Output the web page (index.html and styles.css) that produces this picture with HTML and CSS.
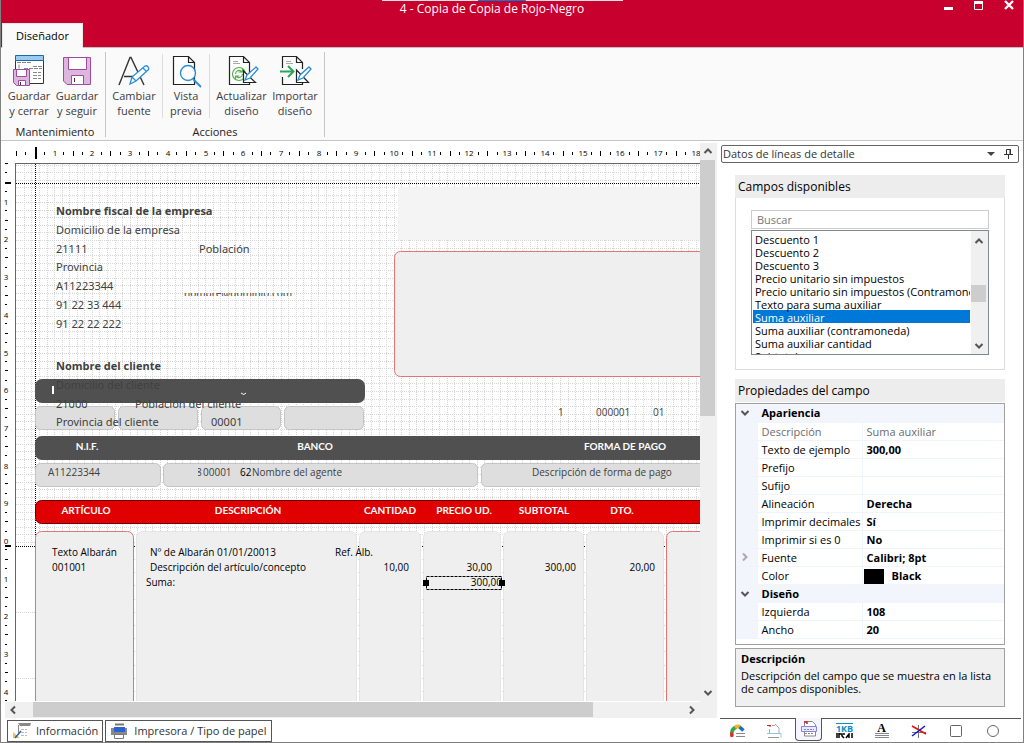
FILE: index.html
```html
<!DOCTYPE html>
<html lang="es">
<head>
<meta charset="utf-8">
<title>4 - Copia de Copia de Rojo-Negro</title>
<link rel="stylesheet" href="styles.css">
</head>
<body>
<div class="window">
  <header class="titlebar">
    <div class="load-strip"><span></span></div>
    <h1 class="title">4 - Copia de Copia de Rojo-Negro</h1>
    <div class="win-buttons">
      <button aria-label="Minimizar"><svg width="12" height="12"><path d="M1 7h9v3H1z" fill="#fff"/></svg></button>
      <button aria-label="Maximizar"><svg width="12" height="12"><path d="M1.5 2.5h8v7h-8z" fill="none" stroke="#fff"/><path d="M1 1h9v3H1z" fill="#fff"/></svg></button>
      <button aria-label="Cerrar"><svg width="12" height="12"><path d="M2 1l8 8M10 1l-8 8" stroke="#fff" stroke-width="2.4"/></svg></button>
    </div>
    <nav class="tabs"><button class="tab">Diseñador</button></nav>
  </header>

  <section class="ribbon">
    <div class="group">
      <div class="tools">
        <button class="tool">
          <svg width="34" height="34"><path d="M3.500 6.500h28v23h-28z" fill="#fff" stroke="#333"/><path d="M3.500 1.500h28v5h-28z" fill="#9ccbee" stroke="#1769b0"/><path d="M5 8.500h14M7 10.500v4M21 12.500h9M12 14.500h18M21 18.500h8M21 21.500h8M21 24.500h8" stroke="#888" stroke-dasharray="4 1"/><path d="M1.500 15.500h16v16h-13l-3-3z" fill="#dcb6dc" stroke="#a04ba0"/><path d="M4.500 15.500h10v7h-10zM6.500 26.500h7v5h-7z" fill="#fff" stroke="#a04ba0"/><path d="M8.500 28v3" stroke="#333"/></svg>
          <span>Guardar<br>y cerrar</span>
        </button>
        <button class="tool">
          <svg width="34" height="34"><path d="M3.500 3.500h27v27H7l-3.500-3.500z" fill="#dcb6dc" stroke="#a04ba0"/><path d="M8.500 3.500h18v12h-18zM11.500 21.500h12v9h-12z" fill="#fff" stroke="#a04ba0"/><path d="M14.500 24v4" stroke="#333"/></svg>
          <span>Guardar<br>y seguir</span>
        </button>
      </div>
      <div class="caption">Mantenimiento</div>
    </div>
    <div class="group">
      <div class="tools">
        <button class="tool">
          <svg width="34" height="34"><path d="M2 31L13 3.500h1L27 31M7 22.500h10" fill="none" stroke="#333" stroke-width="1.400"/><path d="M13 30l2-7L28 12c2-1 5 2 3 4L19 27l-6 3zM15 23l4 4M26 14l3 3" fill="#fff" stroke="#2a8dd4" stroke-width="1.300"/></svg>
          <span>Cambiar<br>fuente</span>
        </button>
        <button class="tool sep">
          <svg width="34" height="34"><path d="M4.500 2.500h15l6 6v22h-21zM19.500 2.500v6h6" fill="#fff" stroke="#222" stroke-width="1.200"/><circle cx="19" cy="19" r="7.500" fill="#fff" stroke="#2a8dd4" stroke-width="1.400"/><path d="M24 25l8 8" stroke="#2a8dd4" stroke-width="1.800"/></svg>
          <span>Vista<br>previa</span>
        </button>
        <button class="tool sep wide">
          <svg width="34" height="34"><path d="M4.500 2.500h14l6 6v22h-20zM18.500 2.500v6h6" fill="#fff" stroke="#222" stroke-width="1.200"/><path d="M8 7.500h5M8 9.500h7" stroke="#aaa"/><circle cx="14" cy="20" r="6.500" fill="#fff" stroke="#55b04c" stroke-width="1.200"/><path d="M10.500 20a3.500 3.500 0 0 1 6-2.500M17.500 20a3.500 3.500 0 0 1-6 2.500M17.500 14v4h-4M10.500 26v-4h4" fill="none" stroke="#55b04c" stroke-width="1.200"/><path d="M18.500 17v11.500h12z" fill="#fff" stroke="#222" stroke-width="1.200"/><path d="M20 26l2-5 9-8 2 2-8 9z" fill="#fff" stroke="#2a8dd4" stroke-width="1.300"/></svg>
          <span>Actualizar<br>diseño</span>
        </button>
        <button class="tool last">
          <svg width="34" height="34"><path d="M4.500 14V2.500h14l6 6V15M18.500 2.500v6h6M4.500 23v7.500h20V28" fill="none" stroke="#222" stroke-width="1.200"/><path d="M8 7.500h5M8 9.500h7" stroke="#aaa"/><path d="M2 17.500h13M10 12l5.500 5.500L10 23" fill="none" stroke="#2ea35c" stroke-width="2"/><path d="M18.500 16v12.500h12z" fill="#fff" stroke="#222" stroke-width="1.200"/><path d="M20 26l2-5 9-8 2 2-8 9z" fill="#fff" stroke="#2a8dd4" stroke-width="1.300"/></svg>
          <span>Importar<br>diseño</span>
        </button>
      </div>
      <div class="caption">Acciones</div>
    </div>
  </section>

  <main class="main">
    <section class="designer">
      <div class="corner"></div>
      <svg class="hruler" id="hruler"></svg>
      <svg class="vruler" id="vruler"></svg>
      <svg class="surface">
        <g transform="translate(-16 -164)">
          <g id="grid" class="grid"></g>
          <path class="guide" d="M16 183.500H2000M16 546.500H2000M35.500 164V547"/>
          <rect x="398" y="187" width="1600" height="53" fill="#f4f4f4"/>
          <rect class="redbox" x="394.500" y="251.500" width="1600" height="125" rx="6"/>
          <rect x="35" y="379" width="330" height="24" rx="7" fill="#505050"/>
          <g class="cells">
            <rect x="35.500" y="406.500" width="79" height="23" rx="5"/>
            <rect x="118.500" y="406.500" width="79" height="23" rx="5"/>
            <rect x="201.500" y="406.500" width="79" height="23" rx="5"/>
            <rect x="284.500" y="406.500" width="79" height="23" rx="5"/>
            <rect x="35.500" y="463.500" width="125" height="23" rx="5"/>
            <rect x="163.500" y="463.500" width="314" height="23" rx="5"/>
            <rect x="481.500" y="463.500" width="1600" height="23" rx="5"/>
          </g>
          <rect x="35" y="436" width="1700" height="24" rx="7" fill="#505050"/>
          <rect x="35.500" y="500.500" width="1700" height="23" rx="6" fill="#e00000" stroke="#6e0000"/>
          <rect class="redbox" x="35.500" y="531.500" width="98" height="1000" rx="6"/>
          <g class="cols">
            <rect x="136.500" y="531.500" width="220" height="1000" rx="6"/>
            <rect x="359.500" y="531.500" width="61" height="1000" rx="6"/>
            <rect x="423.500" y="531.500" width="77" height="1000" rx="6"/>
            <rect x="503.500" y="531.500" width="80" height="1000" rx="6"/>
            <rect x="586.500" y="531.500" width="77" height="1000" rx="6"/>
          </g>
          <rect class="redbox" x="666.500" y="531.500" width="1600" height="1000" rx="6"/>
          <path d="M52 386h2v8h-2z" fill="#fff"/>
          <path d="M241 393q3 3 5 0" fill="none" stroke="#fff"/>
          <g class="field">
            <text class="strong" x="56" y="215">Nombre fiscal de la empresa</text>
            <text x="56" y="234">Domicilio de la empresa</text>
            <text x="56" y="253">21111</text>
            <text x="199" y="253">Población</text>
            <text x="56" y="271">Provincia</text>
            <text x="56" y="290">A11223344</text>
            <text x="56" y="309">91 22 33 444</text>
            <text x="56" y="328">91 22 22 222</text>
            <svg x="184" y="293" width="120" height="3"><text class="mail" x="0" y="4">nombre@dominio.com</text></svg>
            <text class="strong" x="56" y="370">Nombre del cliente</text>
            <text x="56" y="389">Domicilio del cliente</text>
            <text x="56" y="408">21000</text>
            <text x="135" y="408">Población del cliente</text>
            <text x="56" y="426">Provincia del cliente</text>
            <text x="211" y="426">00001</text>
          </g>
          <g class="small">
            <text x="558" y="416">1</text>
            <text x="596" y="416">000001</text>
            <text x="653" y="416">01</text>
            <text x="48" y="476">A11223344</text>
            <svg x="198" y="464" width="4" height="20"><text x="-2" y="12">8</text></svg>
            <text x="203" y="476">00001</text>
            <text x="252" y="476">Nombre del agente</text>
            <text x="532" y="476">Descripción de forma de pago</text>
          </g>
          <g class="small dark">
            <text x="240" y="476">62</text>
            <text x="52" y="556">Texto Albarán</text>
            <text x="52" y="571">001001</text>
            <text x="150" y="556">Nº de Albarán 01/01/20013</text>
            <text x="150" y="571">Descripción del artículo/concepto</text>
            <text x="146" y="586">Suma:</text>
            <text x="335" y="556">Ref. Alb.</text>
            <text class="num" x="409" y="571">10,00</text>
            <text class="num" x="492" y="571">30,00</text>
            <text class="num" x="576" y="571">300,00</text>
            <text class="num" x="655" y="571">20,00</text>
            <text class="num" x="502" y="586">300,00</text>
          </g>
          <g class="head">
            <text x="87" y="450">N.I.F.</text>
            <text x="315" y="450">BANCO</text>
            <text x="625" y="450">FORMA DE PAGO</text>
            <text x="86" y="514">ARTÍCULO</text>
            <text x="248" y="514">DESCRIPCIÓN</text>
            <text x="390" y="514">CANTIDAD</text>
            <text x="464" y="514">PRECIO UD.</text>
            <text x="544" y="514">SUBTOTAL</text>
            <text x="622" y="514">DTO.</text>
          </g>
          <rect x="426.500" y="576.500" width="75" height="13" fill="none" stroke="#000" stroke-dasharray="3 1"/>
          <path d="M423 580h6v6h-6zM499 580h6v6h-6z"/>
        </g>
      </svg>
      <div class="vscroll">
        <svg width="16" height="16"><path d="M4.500 10L8 6.500 11.500 10" class="chev"/></svg>
        <div class="vthumb"></div>
        <svg class="down" width="16" height="16"><path d="M4.500 6L8 9.500 11.500 6" class="chev"/></svg>
      </div>
      <div class="hscroll">
        <svg width="16" height="16"><path d="M10 4.500L6.500 8 10 11.500" class="chev"/></svg>
        <div class="hthumb"></div>
        <svg class="right" width="16" height="16"><path d="M6 4.500L9.500 8 6 11.500" class="chev"/></svg>
      </div>
      <div class="doctabs">
        <button><svg width="20" height="18"><path d="M6 1h13l-1 3H8z" fill="#888"/><path d="M6.500 3v8" stroke="#888"/><path d="M9 7.500h6M9 10.500h6M9 13.500h6" stroke="#bbb" stroke-dasharray="3 1"/><path d="M1 10l7 6H1z" fill="#f2bf62"/><path d="M3 16l6-7" stroke="#2b63a8" stroke-width="1.500"/></svg>Información</button>
        <button><svg width="20" height="18"><path d="M5 2.500h9M3 6v7M16 6v7" stroke="#777" stroke-width="2" fill="none"/><path d="M1 6h16v7H1z" fill="#888"/><path d="M4 5h11v5H4z" fill="#2c61d0"/><path d="M4.500 12.500h9v4h-9z" fill="#fff" stroke="#777"/></svg>Impresora / Tipo de papel</button>
      </div>
    </section>

    <aside class="panel">
      <div class="panel-title">
        <h2>Datos de líneas de detalle</h2>
        <button aria-label="Opciones"><svg width="10" height="12"><path d="M1 4h8L5 8z" fill="#444"/></svg></button>
        <button aria-label="Anclar"><svg width="10" height="12"><path d="M2.500 1.500h4v5h-4zM6 1v6M0 6.500h9M4.500 7v4" fill="none" stroke="#333"/></svg></button>
      </div>
      <div class="panel-body">
        <section class="box">
          <h3>Campos disponibles</h3>
          <div class="box-body">
            <input class="search" type="text" placeholder="Buscar" aria-label="Buscar">
            <div class="listwrap">
              <select class="list" size="10" aria-label="Campos disponibles">
                <option>Descuento 1</option><option>Descuento 2</option><option>Descuento 3</option><option>Precio unitario sin impuestos</option><option>Precio unitario sin impuestos (Contramoneda)</option><option>Texto para suma auxiliar</option><option selected>Suma auxiliar</option><option>Suma auxiliar (contramoneda)</option><option>Suma auxiliar cantidad</option><option>Subtotal</option>
              </select>
              <div class="listscroll">
                <svg width="16" height="16"><path d="M4.500 10L8 6.500 11.500 10" class="chev"/></svg>
                <div class="lthumb"></div>
                <svg class="ldown" width="16" height="16"><path d="M4.500 6L8 9.500 11.500 6" class="chev"/></svg>
              </div>
            </div>
          </div>
        </section>
        <section class="props">
          <h3>Propiedades del campo</h3>
          <div class="propwrap">
          <table class="proptable">
            <colgroup><col class="c1"><col class="c2"><col></colgroup>
            <tr class="cat"><td><svg width="16" height="16"><path d="M4.500 6L8 9.500 11.500 6" class="chev"/></svg></td><th colspan="2">Apariencia</th></tr>
            <tr class="off"><td></td><th>Descripción</th><td>Suma auxiliar</td></tr>
            <tr><td></td><th>Texto de ejemplo</th><td>300,00</td></tr>
            <tr><td></td><th>Prefijo</th><td></td></tr>
            <tr><td></td><th>Sufijo</th><td></td></tr>
            <tr><td></td><th>Alineación</th><td>Derecha</td></tr>
            <tr><td></td><th>Imprimir decimales</th><td>Sí</td></tr>
            <tr><td></td><th>Imprimir si es 0</th><td>No</td></tr>
            <tr><td><svg width="16" height="16"><path d="M6 4.500L9.500 8 6 11.500" class="chev pale"/></svg></td><th>Fuente</th><td>Calibri; 8pt</td></tr>
            <tr><td></td><th>Color</th><td class="colorcell"><span class="swatch"></span>Black</td></tr>
            <tr class="cat"><td><svg width="16" height="16"><path d="M4.500 6L8 9.500 11.500 6" class="chev"/></svg></td><th colspan="2">Diseño</th></tr>
            <tr><td></td><th>Izquierda</th><td>108</td></tr>
            <tr><td></td><th>Ancho</th><td>20</td></tr>
          </table>
          </div>
          <div class="help"><strong>Descripción</strong><p>Descripción del campo que se muestra en la lista de campos disponibles.</p></div>
        </section>
      </div>
      <nav class="bottomtabs">
        <button aria-label="Aspecto"><svg width="18" height="16"><path d="M3 13C2 8 4 5 8 4" fill="none" stroke="#2aa84a" stroke-width="3.500"/><path d="M6 4.500q3-2 5-.5" stroke="#f2b31c" stroke-width="3.500" fill="none"/><path d="M10.500 4l4 3.500" stroke="#1c6dc4" stroke-width="3.500"/><path d="M2.500 9.500l.5 4.500" stroke="#e03020" stroke-width="3"/><path d="M7 10.500h9M7 13.500h9" stroke="#888"/></svg></button>
        <button aria-label="Documento"><svg width="18" height="16"><path d="M2 2.500h4M5 2v2" stroke="#c22" fill="none"/><path d="M7 2.500h3M10 1l4 4v5M4.500 6v5" stroke="#aaa" fill="none"/><path d="M2 10.500h14v4" stroke="#8cc4ea" fill="none"/><path d="M3 14.500h11" stroke="#999"/></svg></button>
        <button class="on" aria-label="Líneas de detalle"><svg width="18" height="18"><path d="M4.500 16V1.500h8l3 3V16z" fill="#fff" stroke="#888"/><path d="M4 2h3v2" stroke="#c22" fill="none" stroke-width="1.500"/><path d="M1.500 6.500h15v5h-15z" fill="#e8e8ff" stroke="#8585e0"/><path d="M4 9.500h10M5 13.500h9" stroke="#888" stroke-dasharray="2 1"/></svg></button>
        <button class="kb" aria-label="Código"><span>1KB</span><svg width="18" height="6"><path d="M1 0v5M3 0v5M3 1h3v2l2 2M8 0v2M10 5l3-4v4M16 0v5" fill="none" stroke="#000" stroke-width="1.500"/></svg></button>
        <button class="letter" aria-label="Texto"><span>A</span><svg width="16" height="6"><path d="M1 .5h14M1 2.500h14M1 4.500h14" stroke="#888"/></svg></button>
        <button aria-label="Líneas"><svg width="18" height="16"><path d="M8.500 2v13M2 9.500h14" stroke="#777"/><path d="M2 3l14 8" stroke="#e01010" stroke-width="1.500"/><path d="M2 13L15 3" stroke="#1414c8" stroke-width="1.500"/></svg></button>
        <button aria-label="Rectángulo"><svg width="16" height="16"><rect x="2.500" y="2.500" width="11" height="11" rx="1" fill="none" stroke="#666"/></svg></button>
        <button aria-label="Círculo"><svg width="16" height="16"><circle cx="8" cy="8" r="5.500" fill="none" stroke="#666"/></svg></button>
      </nav>
    </aside>
  </main>
</div>
<script src="ruler.js"></script>
</body>
</html>
```
FILE: styles.css
```css
* { box-sizing: border-box; }
body, h1, h2, h3, p { margin: 0; }
body {
  height: 100vh;
  font-family: "Open Sans", "Noto Sans", sans-serif;
  font-size: 11px;
  line-height: 14px;
  color: #000;
  background: #fff;
}
button {
  font: inherit;
  color: inherit;
  background: none;
  border: 0;
  padding: 0;
  margin: 0;
}
svg { display: block; flex: none; }

.window {
  display: flex;
  flex-direction: column;
  height: 100%;
  border: 1px solid #808080;
  border-top: 0;
}

.titlebar {
  position: relative;
  display: flex;
  flex-direction: column;
  flex: none;
  height: 48px;
  background: #c8002d;
  border-bottom: 1px solid #c0c0c0;
}
.load-strip {
  position: absolute;
  top: 0;
  left: 381px;
  width: 241px;
  height: 1px;
  background: #e4e4e4;
}
.load-strip span { display: block; width: 48px; height: 1px; margin-left: 96px; background: #0078d7; }
.title {
  padding-top: 1px;
  padding-right: 40px;
  text-align: center;
  font-size: 12px;
  line-height: 16px;
  font-weight: 400;
  color: #fff;
}
.win-buttons { position: absolute; top: 0; right: 8px; display: flex; gap: 18px; }
.tabs { display: flex; margin-top: auto; padding-left: 1px; margin-bottom: -1px; }
.tab {
  height: 25px;
  width: 81px;
  background: #fafafa;
  border: 1px solid #e8e8e8;
  border-bottom: 0;
}

.ribbon {
  display: flex;
  flex: none;
  height: 93px;
  padding: 4px 0 3px;
  background: #fafafa;
  border-bottom: 1px solid #c6c6c6;
}
.group {
  display: flex;
  flex-direction: column;
  justify-content: space-between;
  padding-top: 2px;
  border-right: 1px solid #c6c6c6;
}
.group:first-child { padding-left: 4px; width: 105px; }
.group:last-child { width: 219px; }
.tools { display: flex; }
.tool {
  display: flex;
  flex-direction: column;
  align-items: center;
  width: 48px;
  line-height: 15px;
  color: #3c3c3c;
}
.group:last-child .tool { width: 56px; }
.group:last-child .sep { width: 47px; border-left: 1px solid #dcdcdc; }
.group:last-child .wide { width: 64px; }
.group:last-child .last { width: 44px; }
.tool span { white-space: nowrap; }
.caption { height: 13px; line-height: 16px; text-align: center; color: #222; }

.main { display: flex; flex: 1; min-height: 0; padding-top: 2px; }
.designer {
  display: grid;
  grid-template: 20px 1fr 17px 24px / 14px 1fr 17px;
  flex: 1;
  min-width: 0;
}
.hruler { width: 100%; height: 20px; overflow: hidden; }
.vruler { grid-area: 2 / 1; width: 14px; height: 100%; overflow: hidden; }
.hruler text, .vruler text { font-size: 8px; text-anchor: middle; }
.surface {
  grid-area: 2 / 2;
  width: 100%;
  height: 100%;
  overflow: hidden;
  border-top: 1px solid #666;
  border-left: 1px solid #666;
}
.grid path { stroke: #d6d6d6; stroke-dasharray: 1 1; }
.guide { stroke: #000; stroke-dasharray: 1 1; fill: none; }
.redbox { fill: #efefef; stroke: #e27474; }
.cells rect { fill: #dedede; stroke: #c4c4c4; }
.cols rect { fill: #efefef; stroke: #e4e4e4; }
.field { font-family: "Noto Sans", sans-serif; font-size: 11px; fill: #404040; }
.mail { font-size: 10px; }
.strong { font-family: "Open Sans", sans-serif; font-weight: 700; }
.small { font-size: 10px; fill: #404040; }
.dark { fill: #000; }
.num { text-anchor: end; }
.head { font-family: Lato, sans-serif; font-size: 10px; font-weight: 700; fill: #fff; text-anchor: middle; }

.vscroll {
  grid-area: 1 / 3 / 4 / 4;
  display: flex;
  flex-direction: column;
  background: #f0f0f0;
}
.vthumb { height: 256px; width: 15px; margin-top: 1px; background: #cdcdcd; }
.down { margin-top: auto; margin-bottom: 17px; }
.hscroll {
  grid-area: 3 / 1 / 4 / 3;
  display: flex;
  margin-left: 4px;
  border-top: 1px solid #fff;
  background: #f0f0f0;
}
.hthumb { width: 560px; height: 15px; margin-left: 12px; background: #cdcdcd; }
.right { margin-left: auto; }
.chev { fill: none; stroke: #555; stroke-width: 2; }
.chev.pale { stroke: #aaa; }
.doctabs { grid-area: 4 / 1 / 5 / 4; display: flex; gap: 2px; padding: 2px 0 0 6px; }
.doctabs button {
  display: flex;
  align-items: center;
  gap: 4px;
  padding: 0 4px;
  color: #333;
  border: 1px solid #555;
}

.panel { display: flex; flex-direction: column; flex: none; width: 306px; padding: 2px 2px 0 3px; }
.panel-title {
  display: flex;
  align-items: center;
  gap: 8px;
  height: 18px;
  margin-right: 2px;
  margin-left: 1px;
  padding: 0 4px 0 1px;
  border: 1px solid #666;
  border-radius: 2px;
}
.panel-title h2 { flex: 1; font-size: 11px; font-weight: 400; color: #333; }
.panel-body { flex: 1; padding: 12px 16px 0 15px; min-height: 0; }
h3 { height: 23px; padding: 0 3px; font-size: 12px; line-height: 24px; font-weight: 400; background: #ededed; }
.box-body { padding: 12px 15px 14px; border: 1px solid #dcdcdc; border-top: 0; }
.search {
  display: block;
  width: 100%;
  height: 19px;
  padding: 0 5px;
  font: inherit;
  border: 1px solid #ccc;
  border-radius: 0;
}
.search::placeholder { color: #777; opacity: 1; }
.listwrap { display: flex; height: 125px; margin-top: 1px; border: 1px solid #828790; }
.list {
  flex: 1;
  min-width: 0;
  height: 122px;
  margin: 1px 1px 0;
  padding: 0;
  border: 0;
  outline: 0;
  font: inherit;
  overflow: hidden;
  scrollbar-width: none;
}
.list option { height: 13px; min-height: 13px; padding: 0 2px; line-height: 13px; color: #000; }
.list option:checked { color: #fff; background: linear-gradient(#0078d7, #0078d7); }
.listscroll {
  display: flex;
  flex-direction: column;
  width: 17px;
  padding-top: 2px;
  background: #f0f0f0;
}
.lthumb { height: 17px; width: 15px; margin-top: 36px; background: #cdcdcd; }
.ldown { margin-top: auto; }

.props { margin-top: 9px; }
.propwrap { margin-top: 1px; height: 242px; border: 1px solid #a0a0a0; }
.proptable { width: 100%; table-layout: fixed; border-collapse: collapse; }
.c1 { width: 21px; }
.c2 { width: 105px; }
.proptable td, .proptable th {
  height: 18px;
  padding: 0 4px;
  font-weight: 400;
  text-align: left;
  white-space: nowrap;
  line-height: 17px;
  border-bottom: 1px solid #f0f4fb;
  border-right: 1px solid #f0f4fb;
}
.proptable td:first-child { padding: 0 1px; background: #f2f6fc; }
.proptable td:last-child { font-weight: 700; border-right: 0; }
.proptable .cat th { font-weight: 700; background: #f2f6fc; }
.proptable .off th, .proptable .off td:last-child { color: #6d6d6d; font-weight: 400; }
.proptable .colorcell { padding-left: 1px; }
.swatch { display: inline-block; width: 20px; height: 15px; margin-right: 8px; vertical-align: middle; background: #000; }
.help { height: 59px; margin-top: 3px; padding: 3px 5px; line-height: 13px; background: #f0f0f0; border: 1px solid #a0a0a0; }
.help p { margin-top: 4px; }

.bottomtabs { display: flex; height: 24px; border-top: 1px solid #555; }
.bottomtabs button { display: flex; flex-direction: column; align-items: center; justify-content: center; width: 36px; height: 23px; }
.bottomtabs .on { width: 27px; margin: -1px 4px 0 3px; background: #f5f5ff; border: 1px solid #555; border-top: 0; border-radius: 0 0 4px 4px; }
.bottomtabs .on ~ button { width: 37px; }
.kb span { font-size: 9px; line-height: 9px; font-weight: 700; color: #0a8fc0; border-top: 1px solid #0a8fc0; }
.letter span { font-family: "Liberation Serif", serif; font-size: 12px; font-weight: 700; line-height: 10px; }
```
FILE: ruler.js
```js
(function () {
  var NS = "http://www.w3.org/2000/svg";
  var CM = 37.7;
  function add(parent, tag, attrs, text) {
    var el = document.createElementNS(NS, tag);
    for (var k in attrs) el.setAttribute(k, attrs[k]);
    if (text) el.textContent = text;
    parent.appendChild(el);
  }
  var h = document.getElementById("hruler");
  var v = document.getElementById("vruler");
  var width = h.getBoundingClientRect().width;
  var height = v.getBoundingClientRect().height;

  for (var i = 0; 2 + i * CM < width; i++) {
    var x = 2 + i * CM;
    if (i > 0) {
      add(h, "text", { x: Math.round(x), y: 13 }, String(i));
      add(h, "rect", { x: Math.round(x + CM / 2) - 1, y: 8, width: 1, height: 5 });
    } else {
      add(h, "rect", { x: 1, y: 8, width: 1, height: 5 });
    }
    add(h, "rect", { x: Math.round(x + CM / 4) - 1, y: 9, width: 1, height: 3 });
    add(h, "rect", { x: Math.round(x + CM * 3 / 4) - 1, y: 9, width: 1, height: 3 });
  }
  add(h, "rect", { x: 20, y: 4, width: 2, height: 12 });

  for (var j = 0; 1 + j * CM < height; j++) {
    var y = 1 + j * CM;
    if (j > 0) {
      add(v, "text", { x: 5, y: Math.round(y) + 3 }, String(j % 10));
      add(v, "rect", { x: 4, y: Math.round(y + CM / 2) - 1, width: 3, height: 1 });
    } else {
      add(v, "rect", { x: 4, y: 0, width: 3, height: 1 });
    }
    add(v, "rect", { x: 4, y: Math.round(y + CM / 4) - 1, width: 2, height: 1 });
    add(v, "rect", { x: 4, y: Math.round(y + CM * 3 / 4) - 1, width: 2, height: 1 });
  }
  add(v, "rect", { x: 4, y: 19, width: 6, height: 2 });
  add(v, "rect", { x: 4, y: 382, width: 6, height: 2 });

  var g = document.getElementById("grid");
  var STEP = 7.55;
  for (var a = 0; a < 260; a++) {
    var gx = Math.round(23.9 + a * STEP) + 0.5;
    add(g, "path", { d: "M" + gx + " 164V546" });
    var gy = Math.round(164.5 + a * STEP) + 0.5;
    if (gy < 546) add(g, "path", { d: "M16 " + gy + "H2000" });
  }
  for (var b = 0; b < 60; b++) {
    var by = Math.round(559 + b * 13.2) + 0.5;
    add(g, "path", { d: "M" + (b % 5 === 4 ? 16 : 36) + " " + by + "H2000" });
  }
})();
```
